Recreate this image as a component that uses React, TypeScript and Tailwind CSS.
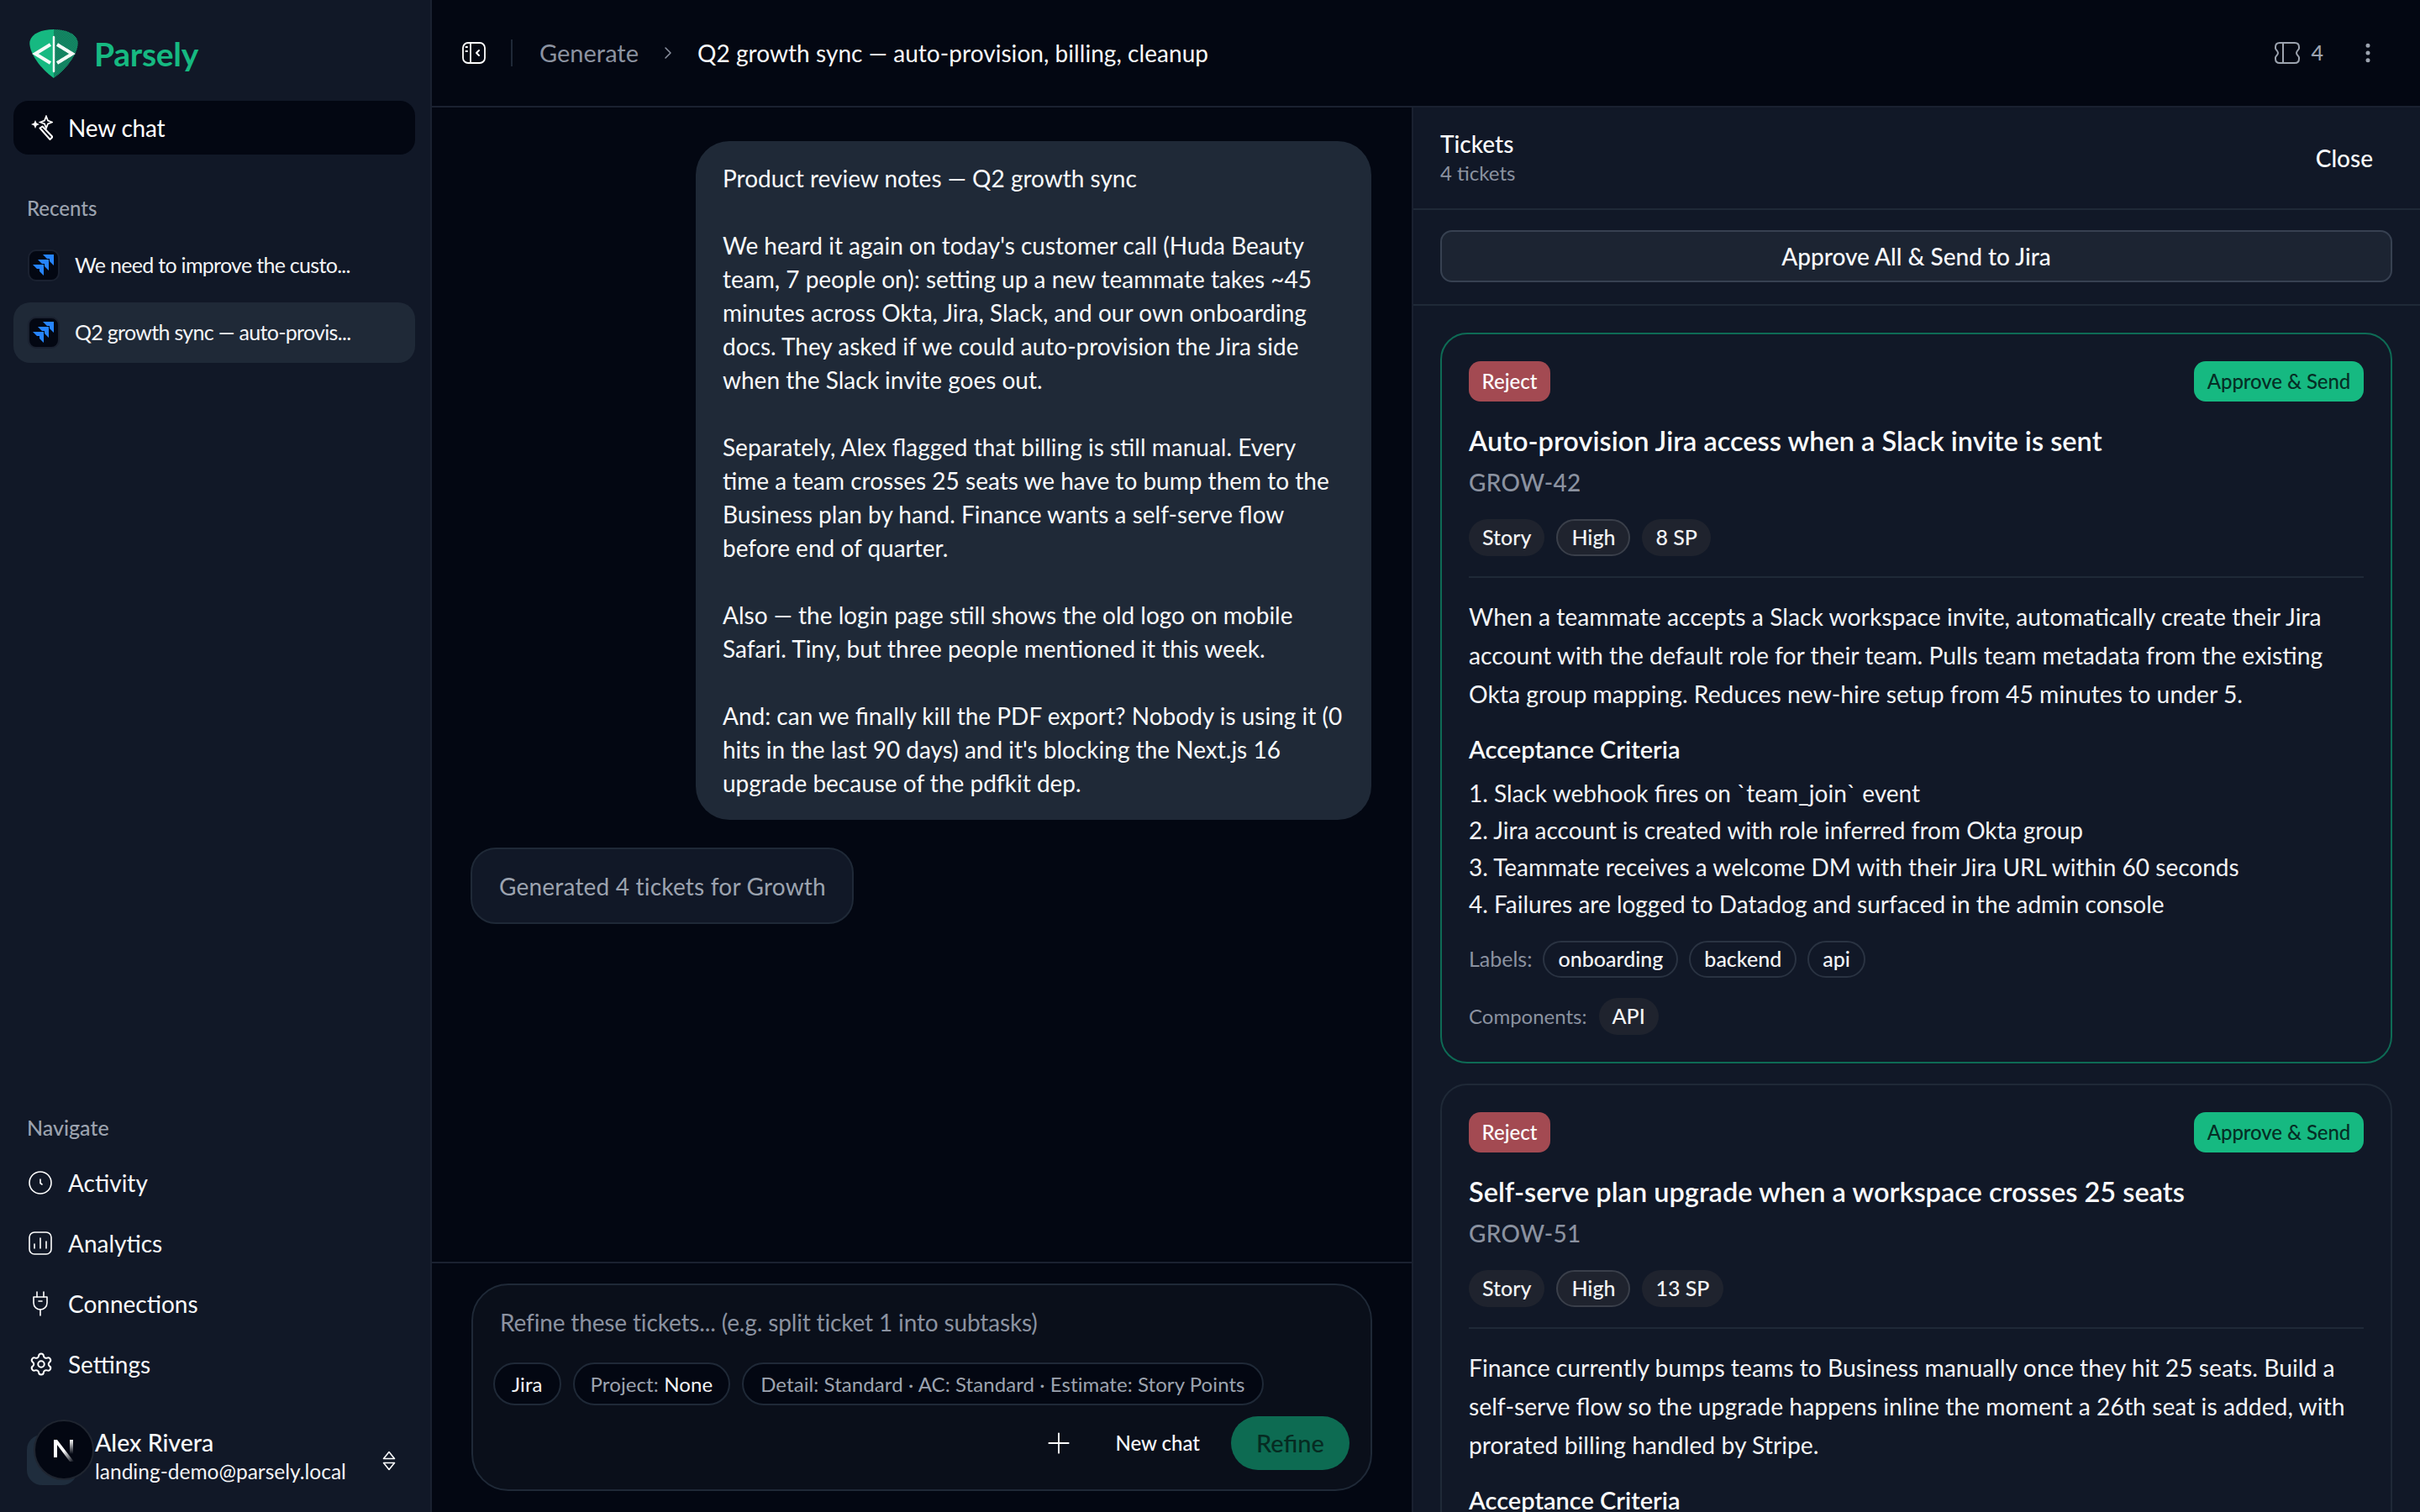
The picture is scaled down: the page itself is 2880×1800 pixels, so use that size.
import { EllipsisVertical, ChevronRight, Plus, Settings } from 'lucide-react';

const noteLines = [
  'Product review notes — Q2 growth sync',
  '',
  "We heard it again on today's customer call (Huda Beauty",
  'team, 7 people on): setting up a new teammate takes ~45',
  'minutes across Okta, Jira, Slack, and our own onboarding',
  'docs. They asked if we could auto-provision the Jira side',
  'when the Slack invite goes out.',
  '',
  'Separately, Alex flagged that billing is still manual. Every',
  'time a team crosses 25 seats we have to bump them to the',
  'Business plan by hand. Finance wants a self-serve flow',
  'before end of quarter.',
  '',
  'Also — the login page still shows the old logo on mobile',
  'Safari. Tiny, but three people mentioned it this week.',
  '',
  'And: can we finally kill the PDF export? Nobody is using it (0',
  "hits in the last 90 days) and it's blocking the Next.js 16",
  'upgrade because of the pdfkit dep.',
];

const tickets = [
  {
    title: 'Auto-provision Jira access when a Slack invite is sent',
    key: 'GROW-42',
    sp: '8 SP',
    active: true,
    desc: [
      'When a teammate accepts a Slack workspace invite, automatically create their Jira',
      'account with the default role for their team. Pulls team metadata from the existing',
      'Okta group mapping. Reduces new-hire setup from 45 minutes to under 5.',
    ],
    criteria: [
      '1. Slack webhook fires on `team_join` event',
      '2. Jira account is created with role inferred from Okta group',
      '3. Teammate receives a welcome DM with their Jira URL within 60 seconds',
      '4. Failures are logged to Datadog and surfaced in the admin console',
    ],
    labels: ['onboarding', 'backend', 'api'],
    components: ['API'],
  },
  {
    title: 'Self-serve plan upgrade when a workspace crosses 25 seats',
    key: 'GROW-51',
    sp: '13 SP',
    active: false,
    desc: [
      'Finance currently bumps teams to Business manually once they hit 25 seats. Build a',
      'self-serve flow so the upgrade happens inline the moment a 26th seat is added, with',
      'prorated billing handled by Stripe.',
    ],
    criteria: [],
    labels: [],
    components: [],
  },
];

function Logo() {
  return (
    <svg viewBox="0 0 58 58" className="h-[58px] w-[58px] shrink-0">
      <defs>
        <pattern id="dither" width="2" height="2" patternUnits="userSpaceOnUse">
          <rect width="2" height="2" fill="#16a777" />
          <rect width="1" height="1" fill="#0f5f4b" />
          <rect x="1" y="1" width="1" height="1" fill="#0f5f4b" />
        </pattern>
      </defs>
      <path d="M29 0C14 0 3 5 0.5 14C-1.5 26 12 46 29 58Z" fill="#16b981" />
      <path d="M29 0C44 0 55 5 57.5 14C59.5 26 46 46 29 58Z" fill="url(#dither)" />
      <path d="M25 18L7 29L25 40" fill="none" stroke="#f4fbf8" strokeWidth="4" />
      <path d="M33 18L51 29L33 40" fill="none" stroke="#f4fbf8" strokeWidth="4" />
      <path d="M29 9V50" stroke="#f4fbf8" strokeWidth="2.5" strokeLinecap="round" />
    </svg>
  );
}

function WandIcon() {
  return (
    <svg viewBox="0 0 28 30" className="h-[30px] w-[28px] shrink-0" fill="none" stroke="white" strokeWidth="2">
      <path d="M7 6L8.5 9.5L12 11L8.5 12.5L7 16L5.5 12.5L2 11L5.5 9.5Z" fill="white" stroke="none" />
      <path d="M20 1.5L22 6.5L27 8.5L22 10.5L20 15.5L18 10.5L13 8.5L18 6.5Z" strokeWidth="1.8" />
      <path d="M12.5 15.5L15.5 13.5L27.5 26L24.5 29Z" strokeLinejoin="round" />
    </svg>
  );
}

function JiraIcon() {
  const piece = (x: number, y: number) =>
    `${x},${y} ${x + 13},${y} ${x + 13},${y + 13} ${x + 8},${y + 8} ${x + 8},${y + 5} ${x + 5},${y + 5}`;
  return (
    <span className="flex h-[38px] w-[38px] shrink-0 items-center justify-center rounded-[10px] border-2 border-[#1a2130] bg-[#030712]">
      <svg viewBox="0 0 26 26" className="h-[26px] w-[26px]">
        <polygon points={piece(0, 12)} fill="#2684ff" />
        <polygon points={piece(6, 6)} fill="#2684ff" />
        <polygon points={piece(12, 0)} fill="#2684ff" />
      </svg>
    </span>
  );
}

function ClockIcon() {
  return (
    <svg viewBox="0 0 28 28" className="h-7 w-7" fill="none" stroke="white" strokeWidth="1.6" strokeLinecap="round">
      <circle cx="14" cy="14" r="13" />
      <path d="M14 10V14.5L16 16" />
    </svg>
  );
}

function ChartIcon() {
  return (
    <svg viewBox="0 0 28 28" className="h-7 w-7" fill="none" stroke="white" strokeWidth="1.6" strokeLinecap="round">
      <rect x="1" y="1" width="26" height="26" rx="6" />
      <path d="M7 15V20M14 8V20M21 12V20" />
    </svg>
  );
}

function PlugIcon() {
  return (
    <svg viewBox="0 0 28 30" className="h-[30px] w-7" fill="none" stroke="white" strokeWidth="1.6" strokeLinecap="round" strokeLinejoin="round">
      <path d="M10 1V7M18 1V7" />
      <path d="M6 7H22V14C22 19 18 22 14 22C10 22 6 19 6 14Z" />
      <path d="M12 12H16" />
      <path d="M14 22V29" />
    </svg>
  );
}

function UpDownIcon() {
  return (
    <svg viewBox="0 0 16 24" className="h-6 w-4" fill="none" stroke="white" strokeWidth="1.6" strokeLinejoin="round">
      <path d="M8 1.5L14.5 9.5H1.5Z" />
      <path d="M1.5 14.5H14.5L8 22.5Z" />
    </svg>
  );
}

function PanelIcon() {
  return (
    <svg viewBox="0 0 28 26" className="h-[26px] w-7" fill="none" stroke="white" strokeWidth="1.8" strokeLinecap="round" strokeLinejoin="round">
      <rect x="1" y="1" width="26" height="24" rx="6" />
      <path d="M10 1V25" />
      <path d="M4.5 6H6M4.5 11H6" strokeWidth="2" />
      <path d="M20 10L17 13L20 16" strokeWidth="2" />
    </svg>
  );
}

function TicketIcon() {
  return (
    <svg viewBox="0 0 30 26" className="h-[26px] w-[30px]" fill="none" stroke="#9ca3af" strokeWidth="2">
      <path d="M6 1H24C27 1 29 3 29 6V7.5C29 9 26 10.5 26 13C26 15.5 29 17 29 18.5V20C29 23 27 25 24 25H6C3 25 1 23 1 20V18.5C1 17 4 15.5 4 13C4 10.5 1 9 1 7.5V6C1 3 3 1 6 1Z" />
      <path d="M10 1V25" />
    </svg>
  );
}

function NavRow({ icon, label }: { icon: React.ReactNode; label: string }) {
  return (
    <div className="flex h-[72px] items-center pl-[34px]">
      <span className="flex w-[47px] shrink-0">{icon}</span>
      <span className="text-[28px] text-[#f9fafb]">{label}</span>
    </div>
  );
}

function RecentRow({ title, active }: { title: string; active?: boolean }) {
  return (
    <div className={`mr-[18px] ml-4 flex h-[72px] items-center gap-[18px] rounded-[20px] pl-[17px] ${active ? 'bg-[#1f2937]' : ''}`}>
      <JiraIcon />
      <span className="whitespace-nowrap text-[25px] tracking-[-0.7px] text-[#f3f4f6]">{title}</span>
    </div>
  );
}

function Pill({ children, outlined, className = '' }: { children: React.ReactNode; outlined?: boolean; className?: string }) {
  return (
    <span className={`flex h-[44px] items-center rounded-full px-[16px] text-[25px] font-medium ${outlined ? 'border-2 border-[#2a3342] text-[#f3f4f6]' : 'bg-[#1f232e] text-[#f3f4f6]'} ${className}`}>
      {children}
    </span>
  );
}

function TicketCard({ ticket }: { ticket: (typeof tickets)[number] }) {
  return (
    <div className={`rounded-[32px] border-2 bg-[#111827] p-[32px] ${ticket.active ? 'border-[#0e6b55]' : 'border-[#1f2937]'}`}>
      <div className="flex items-center justify-between">
        <button className="flex h-12 w-[97px] items-center justify-center rounded-[14px] bg-[#a34a52] text-[24px] font-medium text-white">Reject</button>
        <button className="flex h-12 w-[202px] items-center justify-center rounded-[14px] bg-[#16b981] text-[24px] font-medium tracking-[-0.1px] text-[#052e25]">Approve &amp; Send</button>
      </div>
      <h3 className="mt-[25px] text-[32.5px] leading-[44px] font-semibold text-[#f9fafb]">{ticket.title}</h3>
      <div className="mt-[7px] text-[28px] leading-[40px] font-medium tracking-[0.3px] text-[#8b92a0]">{ticket.key}</div>
      <div className="mt-6 flex gap-[14px]">
        <Pill>Story</Pill>
        <Pill className="border-2 border-[#3a3f4a] text-[23.5px] text-[#c5c8cf]">High</Pill>
        <Pill className="text-[23.5px]">{ticket.sp}</Pill>
      </div>
      <div className="mt-6 h-[2px] bg-[#1f2937]" />
      <div className="mt-[23px] text-[28.3px] leading-[46px] text-[#f3f4f6]">
        {ticket.desc.map((line) => (
          <div key={line} className="whitespace-nowrap">{line}</div>
        ))}
      </div>
      <h4 className="mt-[23px] text-[29px] leading-[40px] font-semibold text-[#f9fafb]">Acceptance Criteria</h4>
      {ticket.criteria.length > 0 && (
        <>
          <div className="mt-[10px] text-[28px] leading-[44px] text-[#f3f4f6]">
            {ticket.criteria.map((line) => (
              <div key={line} className="whitespace-nowrap">{line}</div>
            ))}
          </div>
          <div className="mt-[22px] flex items-center gap-[13px]">
            <span className="text-[25px] text-[#8b92a0]">Labels:</span>
            {ticket.labels.map((label) => (
              <Pill key={label} outlined className="px-[15px]">{label}</Pill>
            ))}
          </div>
          <div className="mt-[24px] flex items-center gap-[14px]">
            <span className="text-[24px] text-[#8b92a0]">Components:</span>
            {ticket.components.map((c) => (
              <Pill key={c}>{c}</Pill>
            ))}
          </div>
        </>
      )}
    </div>
  );
}

function App() {
  return (
    <div className="flex h-[1800px] w-[2880px] overflow-hidden bg-[#030712] font-[Lato,sans-serif] text-[#f9fafb]">
      <aside className="flex w-[514px] shrink-0 flex-col border-r-2 border-[#1a2130] bg-[#111827]">
        <div className="flex h-[120px] items-center gap-[19px] pt-2 pl-[35px]">
          <Logo />
          <span className="text-[39px] font-bold tracking-[-0.3px] text-[#16b981]">Parsely</span>
        </div>
        <div className="mr-[18px] ml-4 flex h-16 items-center gap-[18px] rounded-[18px] bg-[#030712] pl-[19px]">
          <WandIcon />
          <span className="text-[28px] tracking-[-0.2px] text-white">New chat</span>
        </div>
        <div className="mt-12 mb-4 pl-[32px] text-[24px] leading-8 font-medium text-[#9ca3af]">Recents</div>
        <div className="flex flex-col gap-2">
          <RecentRow title="We need to improve the custo..." />
          <RecentRow title="Q2 growth sync — auto-provis..." active />
        </div>
        <div className="mt-auto pb-[32px]">
          <div className="mb-[14px] pl-[32px] text-[25px] leading-8 font-medium text-[#9ca3af]">Navigate</div>
          <NavRow icon={<ClockIcon />} label="Activity" />
          <NavRow icon={<ChartIcon />} label="Analytics" />
          <NavRow icon={<PlugIcon />} label="Connections" />
          <NavRow icon={<Settings size={30} strokeWidth={1.6} color="white" />} label="Settings" />
          <div className="relative mt-[30px] flex h-[78px] items-start pl-[113px]">
            <div className="absolute top-[18px] left-[32px] flex h-[60px] w-[60px] items-center justify-center rounded-[18px] bg-[#1f2d3d] text-[22px] text-[#33404f]">AR</div>
            <div className="absolute top-0 left-[40px] flex h-[72px] w-[72px] items-center justify-center rounded-full border-2 border-[#1f2530] bg-[#030712]">
              <svg viewBox="0 0 30 30" className="h-[30px] w-[30px]">
                <defs>
                  <linearGradient id="nfade" x1="0" y1="0" x2="1" y2="1">
                    <stop offset="0.5" stopColor="white" />
                    <stop offset="1" stopColor="white" stopOpacity="0" />
                  </linearGradient>
                  <linearGradient id="nbar" x1="0" y1="0" x2="0" y2="1">
                    <stop offset="0" stopColor="white" />
                    <stop offset="1" stopColor="white" stopOpacity="0" />
                  </linearGradient>
                </defs>
                <path d="M3 3H7L27 29H22L7 9V24H3Z" fill="url(#nfade)" />
                <rect x="22" y="3" width="4" height="17" fill="url(#nbar)" />
              </svg>
            </div>
            <div className="flex-1 pt-[8px]">
              <div className="text-[28.5px] leading-[38px] font-medium text-[#f9fafb]">Alex Rivera</div>
              <div className="mt-[-3px] text-[24.5px] leading-[38px] text-[#f3f4f6]">landing-demo@parsely.local</div>
            </div>
            <div className="mt-[37px] mr-[41px]">
              <UpDownIcon />
            </div>
          </div>
        </div>
      </aside>

      <main className="flex min-w-0 flex-1 flex-col">
        <header className="flex h-[128px] shrink-0 items-center border-b-2 border-[#1a2130] pr-[47px] pl-9">
          <PanelIcon />
          <div className="mr-[32px] ml-[30px] h-8 w-[2px] bg-[#1f2937]" />
          <span className="text-[29px] text-[#8b92a0]">Generate</span>
          <ChevronRight size={24} strokeWidth={1.5} color="#8b92a0" className="mx-[23px]" />
          <span className="text-[28px] tracking-[0.05px] text-[#f9fafb]">Q2 growth sync — auto-provision, billing, cleanup</span>
          <div className="ml-auto flex items-center gap-[13px]">
            <TicketIcon />
            <span className="text-[25px] font-medium text-[#9ca3af]">4</span>
          </div>
          <EllipsisVertical size={30} color="#9ca3af" fill="#9ca3af" className="ml-[38px]" />
        </header>

        <div className="flex min-h-0 flex-1">
          <section className="flex w-[1166px] shrink-0 flex-col">
            <div className="flex flex-1 flex-col pt-10 pr-12 pl-[46px]">
              <div className="ml-auto w-[804px] rounded-[40px] bg-[#1f2937] px-8 py-6 text-[28px] leading-[40px] text-[#f9fafb]">
                {noteLines.map((line, i) => (
                  <div key={i} className="h-[40px] whitespace-nowrap">{line}</div>
                ))}
              </div>
              <div className="mt-[33px] flex h-[91px] w-[456px] items-center rounded-[30px] border-2 border-[#1f2937] bg-[#111827] pl-8 text-[28px] tracking-[0.2px] text-[#9ca3af]">
                Generated 4 tickets for Growth
              </div>
            </div>
            <div className="shrink-0 border-t-2 border-[#1a2130] px-[47px] pt-6 pb-[25px]">
              <div className="h-[247px] rounded-[44px] border-2 border-[#1f2937] bg-[#0a0f1a] pt-[24px] pr-[25px] pl-6">
                <div className="pl-2 text-[28px] leading-[40px] tracking-[-0.15px] text-[#8b92a0]">Refine these tickets... (e.g. split ticket 1 into subtasks)</div>
                <div className="mt-[28px] flex gap-[14px]">
                  <span className="flex h-[51px] items-center rounded-full border-2 border-[#1f2937] bg-[#030712] px-5 text-[24px] tracking-[0.1px] text-[#f3f4f6]">Jira</span>
                  <span className="flex h-[51px] items-center rounded-full border-2 border-[#1f2937] bg-[#030712] px-[19px] text-[24px] tracking-[0.1px] text-[#9ca3af]">
                    Project:&nbsp;<span className="text-[#f3f4f6]">None</span>
                  </span>
                  <span className="flex h-[51px] items-center rounded-full border-2 border-[#1f2937] bg-[#030712] px-5 text-[24px] tracking-[0.08px] text-[#9ca3af]">Detail: Standard · AC: Standard · Estimate: Story Points</span>
                </div>
                <div className="mt-[13px] flex items-center justify-end">
                  <Plus size={40} strokeWidth={1.1} color="white" />
                  <span className="mr-[37px] ml-[47px] text-[24px] font-medium text-[#f9fafb]">New chat</span>
                  <button className="flex h-16 w-[141px] items-center justify-center rounded-full bg-[#0d6b52] text-[29px] font-medium text-[#062b22]">Refine</button>
                </div>
              </div>
            </div>
          </section>

          <section className="min-w-0 flex-1 overflow-hidden border-l-2 border-[#1a2130] bg-[#111827]">
            <div className="flex h-[122px] items-center justify-between border-b-2 border-[#1f2937] pr-[56px] pl-8">
              <div>
                <div className="text-[28px] leading-[36px] font-medium text-[#f9fafb]">Tickets</div>
                <div className="text-[24px] leading-[34px] text-[#8b92a0]">4 tickets</div>
              </div>
              <span className="text-[28px] font-medium text-[#f9fafb]">Close</span>
            </div>
            <div className="border-b-2 border-[#1f2937] px-8 pt-[24px] pb-[26px] pr-[33px]">
              <button className="flex h-[62px] w-full items-center justify-center rounded-[14px] border-2 border-[#374151] bg-[#1c2432] text-[28px] font-medium text-[#f9fafb]">Approve All &amp; Send to Jira</button>
            </div>
            <div className="flex flex-col gap-6 pt-8 pr-[33px] pl-8">
              {tickets.map((ticket) => (
                <TicketCard key={ticket.key} ticket={ticket} />
              ))}
            </div>
          </section>
        </div>
      </main>
    </div>
  );
}

export default App;
